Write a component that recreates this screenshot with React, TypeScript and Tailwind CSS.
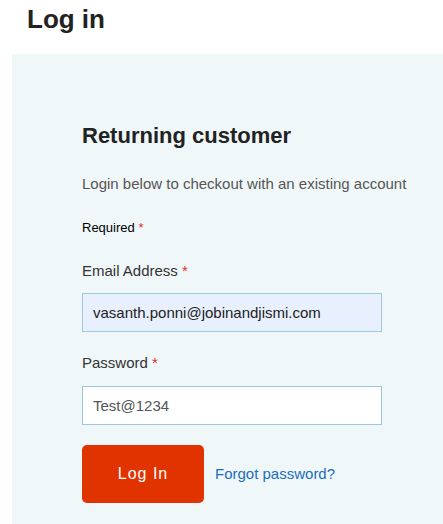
import React from 'react';

function Label({ text }: { text: string }) {
  return (
    <label className="block text-[15px] leading-[20px] text-[#333]">
      {text} <span className="text-[#e02b27]">*</span>
    </label>
  );
}

export default function App() {
  return (
    <div className="min-h-[524px] bg-white font-['Liberation_Sans',Arial,sans-serif] flex flex-col">
      <h1 className="pl-[27px] pt-[3px] text-[26px] leading-[32px] font-bold text-[#222]">Log in</h1>

      <div className="ml-3 mt-[19px] flex-1 bg-[#f0f7f9] pt-[69px] pl-[70px] pb-6">
        <h2 className="text-[22px] leading-[26px] font-bold text-[#222]">Returning customer</h2>
        <p className="mt-[25px] text-[15px] leading-[20px] text-[#555]">
          Login below to checkout with an existing account
        </p>
        <p className="mt-[25px] text-[13px] leading-[18px] text-black">
          Required <span className="text-[#e02b27]">*</span>
        </p>

        <div className="mt-6">
          <Label text="Email Address" />
          <input
            type="text"
            defaultValue="vasanth.ponni@jobinandjismi.com"
            className="mt-3 block w-[300px] h-[39px] px-[10px] bg-[#e8f0fe] border border-[#9ccadb] text-[15px] text-[#222] outline-none"
          />
        </div>

        <div className="mt-[21px]">
          <Label text="Password" />
          <input
            type="text"
            defaultValue="Test@1234"
            className="mt-[13px] block w-[300px] h-[39px] px-[10px] bg-white border border-[#9ccadb] text-[15px] text-[#555] outline-none"
          />
        </div>

        <div className="mt-5 flex items-center gap-[11px]">
          <button className="w-[122px] h-[58px] rounded-[5px] bg-[#e03300] text-white text-[16px] tracking-[1px]">
            Log In
          </button>
          <a href="#" className="text-[15px] text-[#1a6ebd]">Forgot password?</a>
        </div>
      </div>
    </div>
  );
}
